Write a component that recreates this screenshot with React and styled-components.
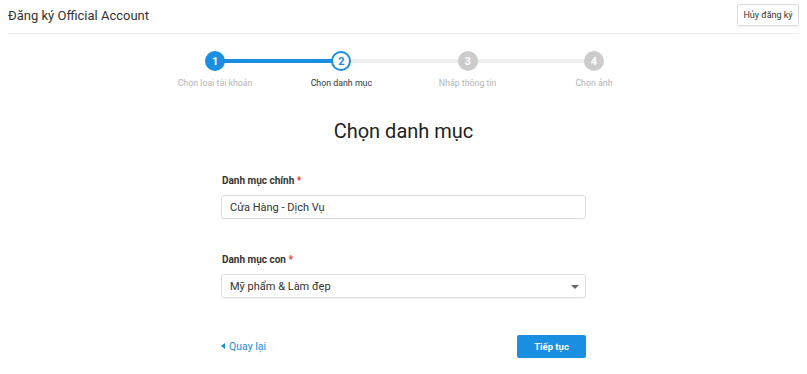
import React from "react";
import styled, { createGlobalStyle } from "styled-components";

const Global = createGlobalStyle`
  html, body { margin: 0; padding: 0; background: #fff; }
  body { font-family: Roboto, "Noto Sans", Arial, sans-serif; color: #333; }
  * { box-sizing: border-box; }
`;

const BLUE = "#1a8ee0";

const Page = styled.div`
  padding: 0 8px;
  width: 807px;
`;

const Header = styled.div`
  display: flex;
  align-items: center;
  justify-content: space-between;
  height: 34px;
  border-bottom: 1px solid #ececec;
  padding-bottom: 1px;
`;

const Title = styled.div`
  font-size: 13px;
  color: #333;
  line-height: 16px;
`;

const CancelButton = styled.button`
  font-family: inherit;
  font-size: 9px;
  color: #333;
  background: #fff;
  border: 1px solid #dcdcdc;
  border-radius: 2px;
  height: 22px;
  width: 62px;
  padding: 0;
  margin-top: -2px;
  white-space: nowrap;
  box-shadow: 0 1px 1px rgba(0, 0, 0, 0.05);
`;

const Stepper = styled.div`
  display: grid;
  grid-template-columns: repeat(4, 126.3px);
  justify-content: center;
  padding-top: 17px;
  padding-left: 2px;
`;

const Step = styled.div`
  position: relative;
  display: flex;
  flex-direction: column;
  align-items: center;

  &::after {
    content: "";
    display: ${(p) => (p.$last ? "none" : "block")};
    position: absolute;
    top: 8px;
    left: 50%;
    width: 100%;
    height: 4px;
    background: ${(p) => (p.$lineActive ? BLUE : "#eeeeee")};
    z-index: 0;
  }
`;

const Circle = styled.div`
  position: relative;
  z-index: 1;
  width: 20px;
  height: 20px;
  border-radius: 50%;
  display: flex;
  align-items: center;
  justify-content: center;
  font-size: 11px;
  font-weight: 700;
  ${(p) =>
    p.$state === "done"
      ? `background: ${BLUE}; color: #fff;`
      : p.$state === "current"
      ? `background: #fff; color: ${BLUE}; border: 2px solid ${BLUE};`
      : `background: #cccccc; color: #fff;`}
`;

const StepLabel = styled.div`
  margin-top: 6px;
  font-size: 8.8px;
  line-height: 12px;
  white-space: nowrap;
  color: ${(p) => (p.$current ? "#333" : "#b5b5b5")};
`;

const Heading = styled.h1`
  margin: 29px 0 0;
  text-align: center;
  font-size: 20px;
  font-weight: 400;
  line-height: 26px;
  color: #222;
`;

const Form = styled.div`
  width: 365px;
  margin: 0 auto;
  display: flex;
  flex-direction: column;
`;

const Field = styled.div`
  display: flex;
  flex-direction: column;
  gap: 7px;
  margin-top: ${(p) => p.$mt}px;
`;

const Label = styled.div`
  font-size: 10px;
  font-weight: 700;
  line-height: 14px;
  color: #333;
  padding-left: 1px;
`;

const Star = styled.span`
  color: #e53935;
`;

const Box = styled.div`
  position: relative;
  height: 24px;
  border: 1px solid #dedede;
  border-radius: 3px;
  display: flex;
  align-items: center;
  padding: 0 8px;
  font-size: 11px;
  color: #333;
  box-shadow: 0 1px 1px rgba(0, 0, 0, 0.04);
`;

const Caret = styled.span`
  position: absolute;
  right: 6px;
  top: 10px;
  width: 0;
  height: 0;
  border-left: 4px solid transparent;
  border-right: 4px solid transparent;
  border-top: 4px solid #666;
`;

const Actions = styled.div`
  display: flex;
  align-items: center;
  justify-content: space-between;
  margin-top: 37px;
`;

const BackLink = styled.a`
  display: flex;
  align-items: center;
  gap: 4px;
  font-size: 10.5px;
  color: ${BLUE};
  text-decoration: none;
  margin-top: -1px;
`;

const BackArrow = styled.span`
  width: 0;
  height: 0;
  border-top: 3.5px solid transparent;
  border-bottom: 3.5px solid transparent;
  border-right: 4px solid ${BLUE};
`;

const NextButton = styled.button`
  font-family: inherit;
  width: 69px;
  height: 23px;
  border: none;
  border-radius: 2px;
  background: ${BLUE};
  color: #fff;
  font-size: 9.5px;
  font-weight: 700;
  padding: 0;
`;

const steps = [
  { n: 1, label: "Chọn loại tài khoản", state: "done" },
  { n: 2, label: "Chọn danh mục", state: "current" },
  { n: 3, label: "Nhập thông tin", state: "todo" },
  { n: 4, label: "Chọn ảnh", state: "todo" },
];

export default function App() {
  return (
    <Page>
      <Global />
      <Header>
        <Title>Đăng ký Official Account</Title>
        <CancelButton>Hủy đăng ký</CancelButton>
      </Header>
      <Stepper>
        {steps.map((s, i) => (
          <Step key={s.n} $last={i === steps.length - 1} $lineActive={s.state === "done"}>
            <Circle $state={s.state}>{s.n}</Circle>
            <StepLabel $current={s.state === "current"}>{s.label}</StepLabel>
          </Step>
        ))}
      </Stepper>
      <Heading>Chọn danh mục</Heading>
      <Form>
        <Field $mt={30}>
          <Label>
            Danh mục chính <Star>*</Star>
          </Label>
          <Box>Cửa Hàng - Dịch Vụ</Box>
        </Field>
        <Field $mt={34}>
          <Label>
            Danh mục con <Star>*</Star>
          </Label>
          <Box>
            Mỹ phẩm &amp; Làm đẹp
            <Caret />
          </Box>
        </Field>
        <Actions>
          <BackLink href="#">
            <BackArrow />
            Quay lại
          </BackLink>
          <NextButton>Tiếp tục</NextButton>
        </Actions>
      </Form>
    </Page>
  );
}
